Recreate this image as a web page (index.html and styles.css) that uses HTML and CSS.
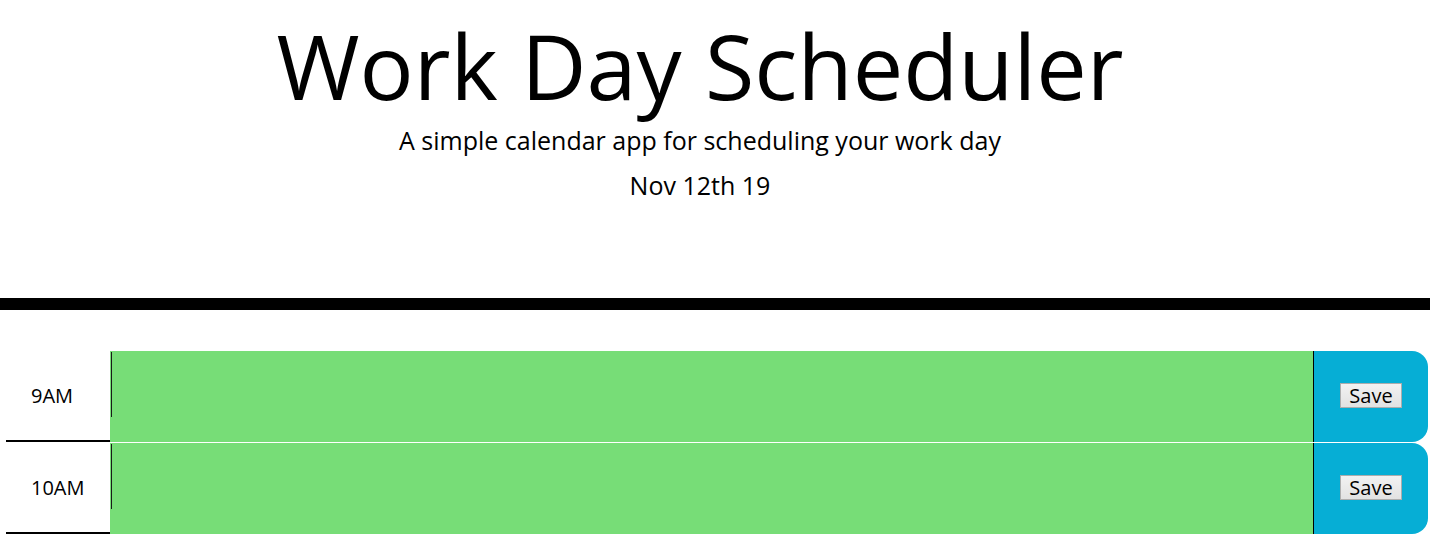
FILE: index.html
```html
<!DOCTYPE html>
<html lang="en">
<head>
<meta charset="utf-8">
<title>Work Day Scheduler</title>
<link rel="stylesheet" href="styles.css">
</head>
<body>
<header class="jumbotron">
  <h1 class="title">Work Day Scheduler</h1>
  <p class="lead">A simple calendar app for scheduling your work day</p>
  <p class="current-day">Nov 12th 19</p>
</header>
<main class="container">
  <div class="row">
    <div class="hour">9AM</div>
    <div class="description future"></div>
    <div class="save-col"><button class="save-btn">Save</button></div>
  </div>
  <div class="row">
    <div class="hour">10AM</div>
    <div class="description future"></div>
    <div class="save-col"><button class="save-btn">Save</button></div>
  </div>
</main>
</body>
</html>
```
FILE: styles.css
```css
* { box-sizing: border-box; }
html, body { margin: 0; padding: 0; background: #fff; }
body {
  font-family: "Open Sans", "Noto Sans", sans-serif;
  color: #000;
  overflow: hidden;
}
.jumbotron {
  text-align: center;
  padding: 20px 30px 0 0;
  height: 310px;
  border-bottom: 12px solid #000;
}
.title {
  margin: 0;
  font-size: 90px;
  font-weight: 400;
  line-height: 90px;
}
.lead {
  margin: 18px 0 0;
  font-size: 25px;
  line-height: 25px;
}
.current-day {
  margin: 20px 0 0;
  font-size: 25px;
  line-height: 25px;
}
.container {
  padding: 40px 2px 0 6px;
}
.row {
  display: flex;
  height: 92px;
  border-top: 1px solid #fff;
}
.hour {
  width: 104px;
  display: flex;
  align-items: center;
  padding-left: 25px;
  font-size: 20px;
  border-bottom: 2px solid #000;
}
.description {
  flex: 1;
}
.future {
  background: linear-gradient(#1a1a1a, #1a1a1a) 1px 1px / 1px 65px no-repeat, #77dd77;
}
.save-col {
  width: 115px;
  background: #06aed5;
  border-left: 1px solid #000;
  border-radius: 0 16px 16px 0;
  display: flex;
  align-items: center;
  justify-content: center;
}
.save-btn {
  width: 62px;
  height: 25px;
  padding: 0;
  font-family: "Open Sans", "Noto Sans", sans-serif;
  font-size: 20px;
  line-height: 22px;
  color: #000;
  background: linear-gradient(#f2f2f2, #e2e2e2);
  border: 1px solid #adadad;
  border-radius: 0;
  margin-top: -2px;
}
```
